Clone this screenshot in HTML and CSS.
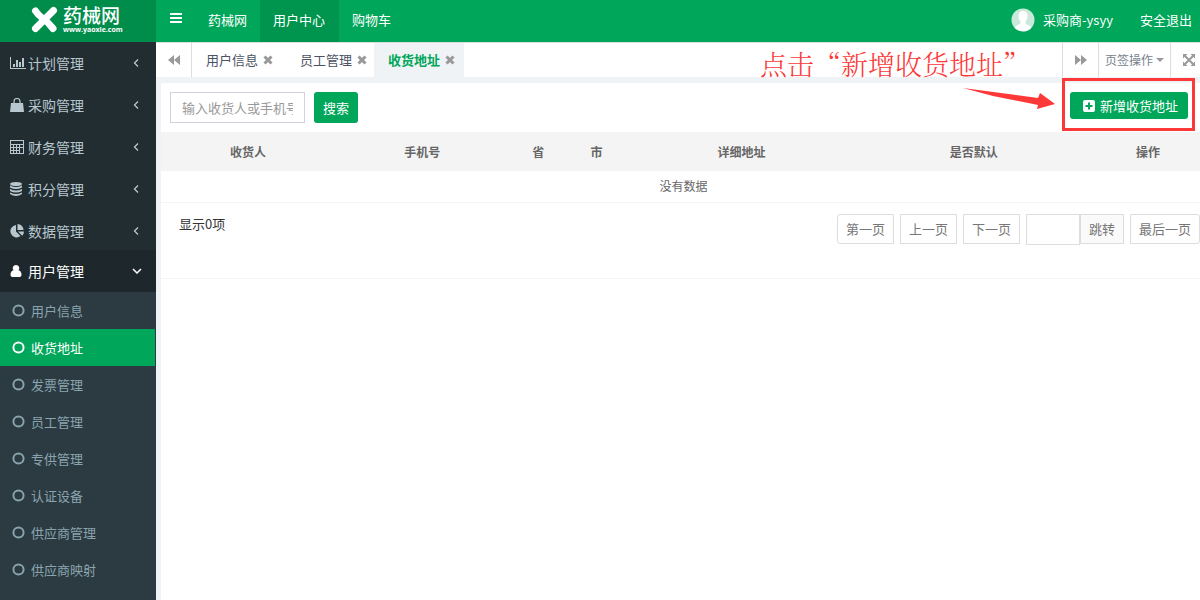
FILE: index.html
```html
<!DOCTYPE html>
<html lang="zh-CN">
<head>
<meta charset="utf-8">
<title>收货地址 - 药械网</title>
<meta name="viewport" content="width=device-width, initial-scale=1">
<link rel="stylesheet" href="styles.css">
</head>
<body>
<svg class="defs" aria-hidden="true">
  <symbol id="left" viewBox="0 0 6 10"><path d="M5 1.500L1.500 5L5 8.500" fill="none" stroke="currentColor" stroke-width="1.300"/></symbol>
  <symbol id="ring" viewBox="0 0 12 12"><circle cx="6" cy="6" r="4.700" fill="none" stroke="currentColor" stroke-width="1.800"/></symbol>
  <symbol id="close" viewBox="0 0 10 10"><path d="M1.500 1.500L8.500 8.500M8.500 1.500L1.500 8.500" fill="none" stroke="currentColor" stroke-width="3"/></symbol>
</svg>
<aside class="sidebar">
  <a class="logo" href="#" aria-label="药械网">
    <svg class="logo-mark" viewBox="0 0 27 27" aria-hidden="true"><path d="M4.500 5Q7 9 12 12.500T22 22.500" fill="none" stroke="#fff" stroke-width="7" stroke-linecap="round"/><path d="M22.500 4.500L4.500 22.500" fill="none" stroke="#fff" stroke-width="7" stroke-linecap="round"/></svg>
    <span class="logo-text"><b>药械网</b><small>www.yaoxie.com</small></span>
  </a>
  <nav class="menu">
    <a class="item" href="#"><svg class="icon" viewBox="0 0 16 14"><path d="M0 1h1v11h15v1H0zM3 8h2v3H3zM6 4h2v7H6zM9 6h2v5H9zM12 2h2v9h-2z" fill="currentColor"/></svg><span>计划管理</span><svg class="arrow"><use href="#left"/></svg></a>
    <a class="item" href="#"><svg class="icon" viewBox="0 0 16 14"><path d="M1 5h12l1 9H0z" fill="currentColor"/><path d="M4 7V3.500a3 3 0 0 1 6 0V7" fill="none" stroke="currentColor" stroke-width="1.200"/></svg><span>采购管理</span><svg class="arrow"><use href="#left"/></svg></a>
    <a class="item" href="#"><svg class="icon" viewBox="0 0 16 14"><path fill-rule="evenodd" d="M0 0h14v14H0zM1 1v3h12V1zM1 5v2h2V5zM4 5v2h2V5zM7 5v2h2V5zM10 5v2h3V5zM1 8v2h2V8zM4 8v2h2V8zM7 8v2h2V8zM1 11v2h2v-2zM4 11v2h2v-2zM7 11v2h2v-2zM10 8v5h3V8z" fill="currentColor"/></svg><span>财务管理</span><svg class="arrow"><use href="#left"/></svg></a>
    <a class="item" href="#"><svg class="icon" viewBox="0 0 16 14"><g fill="currentColor"><ellipse cx="6" cy="2" rx="6" ry="2"/><path d="M0 3.500q6 3 12 0v2q-6 3-12 0zM0 7q6 3 12 0v2q-6 3-12 0zM0 10.500q6 3 12 0v1.500q-6 4-12 0z"/></g></svg><span>积分管理</span><svg class="arrow"><use href="#left"/></svg></a>
    <a class="item" href="#"><svg class="icon" viewBox="0 0 16 14"><path d="M6 1v6.500l4.500 4.500A6.200 6.200 0 1 1 6 1zM7.500 0a6 6 0 0 1 6 6h-6zM8 7.500h6a6 6 0 0 1-1.800 4.200z" fill="currentColor"/></svg><span>数据管理</span><svg class="arrow"><use href="#left"/></svg></a>
    <a class="item open" href="#"><svg class="icon" viewBox="0 0 16 14"><path d="M6 1a3.200 3.200 0 0 1 2.500 5.300Q11.500 7 11.500 11q0 2-2 2h-7q-2 0-2-2 0-4 3-4.700A3.200 3.200 0 0 1 6 1z" fill="currentColor"/></svg><span>用户管理</span><svg class="arrow down" viewBox="0 0 10 6"><path d="M1 1L5 5L9 1" fill="none" stroke="currentColor" stroke-width="1.500"/></svg></a>
    <div class="submenu">
      <a href="#"><svg class="ring"><use href="#ring"/></svg>用户信息</a>
      <a href="#" class="current" aria-current="page"><svg class="ring"><use href="#ring"/></svg>收货地址</a>
      <a href="#"><svg class="ring"><use href="#ring"/></svg>发票管理</a>
      <a href="#"><svg class="ring"><use href="#ring"/></svg>员工管理</a>
      <a href="#"><svg class="ring"><use href="#ring"/></svg>专供管理</a>
      <a href="#"><svg class="ring"><use href="#ring"/></svg>认证设备</a>
      <a href="#"><svg class="ring"><use href="#ring"/></svg>供应商管理</a>
      <a href="#"><svg class="ring"><use href="#ring"/></svg>供应商映射</a>
    </div>
  </nav>
</aside>
<div class="main">
  <header class="topbar">
    <button class="toggle" type="button" aria-label="切换菜单"><svg viewBox="0 0 12 10"><path d="M0 1h12M0 5h12M0 9h12" stroke="currentColor" stroke-width="2"/></svg></button>
    <nav class="topnav"><a href="#">药械网</a><a href="#" class="on">用户中心</a><a href="#">购物车</a></nav>
    <div class="account">
      <a class="user" href="#"><svg class="avatar" viewBox="0 0 24 24"><circle cx="12" cy="12" r="11.500" fill="#cbe9da"/><path d="M12 3c3 0 4.500 2 4.500 5 0 2.500-.8 4.200-2 5.500v2l4.500 2.500q1 .7 1 2a11.500 11.500 0 0 1-16 0q0-1.300 1-2l4.500-2.500v-2c-1.200-1.300-2-3-2-5.500 0-3 1.500-5 4.500-5z" fill="#fff"/></svg>采购商-ysyy</a>
      <a href="#">安全退出</a>
    </div>
  </header>
  <div class="tabs">
    <button class="tool back" type="button" aria-label="向左"><svg viewBox="0 0 12 10"><path d="M6 0v10L0 5zM12 0v10L6 5z" fill="currentColor"/></svg></button>
    <nav class="tablist">
      <a href="#">用户信息<svg class="close"><use href="#close"/></svg></a>
      <a href="#">员工管理<svg class="close"><use href="#close"/></svg></a>
      <a href="#" class="active">收货地址<svg class="close"><use href="#close"/></svg></a>
    </nav>
    <button class="tool" type="button" aria-label="向右"><svg viewBox="0 0 12 10"><path d="M0 0v10l6-5zM6 0v10l6-5z" fill="currentColor"/></svg></button>
    <button class="tool ops" type="button">页签操作<i class="caret"></i></button>
    <button class="tool full" type="button" aria-label="全屏"><svg viewBox="0 0 12 12"><path d="M0 0h4.500L0 4.500zM12 0v4.500L7.500 0zM0 12V7.500L4.500 12zM12 12H7.500L12 7.500z" fill="currentColor"/><path d="M2 2l8 8M10 2l-8 8" stroke="currentColor" stroke-width="2"/></svg></button>
  </div>
  <main class="content">
    <form class="search">
      <input type="text" aria-label="收货人或手机号" placeholder="输入收货人或手机号">
      <button class="btn" type="button">搜索</button>
      <button class="btn add" type="button"><svg viewBox="0 0 12 12"><rect width="12" height="12" rx="2" fill="#fff"/><path d="M6 2.500v7M2.500 6h7" stroke="#00a65a" stroke-width="2"/></svg>新增收货地址</button>
    </form>
    <table class="grid">
      <colgroup><col span="2" class="c3"><col span="2" class="c1"><col span="2" class="c4"><col class="c2"></colgroup>
      <thead><tr><th>收货人</th><th>手机号</th><th>省</th><th>市</th><th>详细地址</th><th>是否默认</th><th>操作</th></tr></thead>
      <tbody><tr><td colspan="7">没有数据</td></tr></tbody>
    </table>
    <footer class="pager">
      <span class="count">显示0项</span>
      <button class="page first" type="button">第一页</button>
      <button class="page" type="button">上一页</button>
      <button class="page" type="button">下一页</button>
      <span class="jump"><input type="text" aria-label="页码"><button type="button">跳转</button></span>
      <button class="page last" type="button">最后一页</button>
    </footer>
  </main>
</div>
<div class="callout">点击<span>“</span>新增收货地址<span>”</span></div>
<svg class="pointer" viewBox="0 0 92 24" aria-hidden="true"><path d="M0 0L75 10L77 5L92 16L74 21L75 17L30 8Z" fill="#fd3838"/></svg>
<div class="highlight"></div>
</body>
</html>
```
FILE: styles.css
```css
* { box-sizing: border-box; }
body {
  margin: 0;
  min-height: 100vh;
  display: flex;
  position: relative;
  overflow: hidden;
  background: #eff3f5;
  font: 13px/20px "Noto Sans CJK SC", sans-serif;
  color: #333;
}
a { color: inherit; text-decoration: none; }
button, input { font: inherit; color: inherit; margin: 0; }
button { padding: 0; border: 0; background: none; }
svg { display: block; flex: none; }
.defs { position: absolute; width: 0; height: 0; }

.sidebar { width: 156px; flex: none; background: #222d32; }
.logo {
  height: 42px;
  display: flex;
  align-items: center;
  gap: 5px;
  padding: 0 0 4px 31px;
  background: #008d4c;
  color: #fff;
}
.logo-mark { width: 27px; height: 27px; }
.logo-text { display: flex; flex-direction: column; }
.logo-text b { font-size: 19px; line-height: 22px; font-weight: 500; }
.logo-text small { font: bold 7px/8px "Open Sans", sans-serif; }
.menu { color: #b8c7ce; }
.item { height: 42px; display: flex; align-items: center; padding: 0 17px 0 10px; font-size: 14px; }
.item .icon { width: 16px; height: 14px; margin-right: 2px; }
.item .arrow { width: 6px; height: 10px; margin: 0 0 0 auto; }
.item .arrow.down { width: 10px; height: 6px; }
.item.open { margin-top: -2px; padding: 0 14px 0 10px; background: #1e282c; color: #fff; }
.submenu { background: #2c3b41; color: #8aa4af; min-height: calc(100vh - 292px); }
.submenu a { height: 37px; margin-right: 1px; padding-left: 12px; display: flex; align-items: center; gap: 6px; }
.ring { width: 13px; height: 13px; }
.submenu .current { background: #00a65a; color: #fff; }

.main { flex: 1; min-width: 0; display: flex; flex-direction: column; }
.topbar { height: 42px; display: flex; background: #00a65a; color: #fff; }
.toggle { width: 39px; padding-bottom: 7px; display: grid; place-items: center; }
.toggle svg { width: 12px; height: 10px; }
.topnav { display: flex; }
.topnav a { padding: 10px 13px 0; }
.topnav .on { background: #00954f; padding-right: 14px; }
.account { margin-left: auto; padding-right: 8px; display: flex; align-items: center; gap: 27px; padding-bottom: 2px; }
.user { display: flex; align-items: center; gap: 8px; }
.avatar { width: 24px; height: 24px; }

.tabs { height: 35px; display: flex; background: #fff; border-top: 1px solid #ddd; color: #999; }
.tool { width: 36px; display: grid; place-items: center; border-left: 1px solid #ddd; }
.tool svg { width: 12px; height: 10px; }
.tool.back { border-left: 0; border-right: 1px solid #ddd; }
.tool.ops { width: 72px; display: flex; align-items: center; justify-content: center; gap: 3px; font-size: 12px; color: #777f8c; }
.caret { border: 4px solid transparent; border-top-color: #999; border-bottom: 0; }
.tool.full { width: 30px; padding-left: 6px; }
.tool.full svg { width: 12px; height: 12px; }
.tablist { flex: 1; display: flex; color: #4c5263; }
.tablist a { display: flex; align-items: center; gap: 5px; padding: 0 9px 0 14px; }
.tablist a + a { padding: 0 7px 0 18px; }
.tablist a + a.active { background: #eff3f5; color: #00a65a; font-weight: 700; padding: 0 9px 0 14px; }
.close { width: 10px; height: 10px; color: #999; }

.content { flex: 1; margin: 6px -6px 0 5px; background: #fff; }
.search { display: flex; height: 49px; padding: 9px 18px 0 9px; align-items: flex-start; gap: 9px; }
.search input { width: 135px; height: 31px; padding: 0 11px; border: 1px solid #d2d2de; background: #fff; }
.search input::placeholder { color: #999; opacity: 1; }
.btn { height: 31px; padding: 0 9px; border-radius: 3px; background: #00a65a; color: #fff; }
.btn.add { height: 27px; margin-left: auto; padding: 0 10px 0 13px; display: flex; align-items: center; gap: 5px; }
.btn.add svg { width: 12px; height: 12px; }
.grid { width: 100%; table-layout: fixed; border-collapse: collapse; font-size: 12px; line-height: 18px; text-align: center; color: #666; }
.c1 { width: 5.555%; }
.c2 { width: 11.111%; }
.c3 { width: 16.666%; }
.c4 { width: 22.222%; }
.grid th { height: 39px; padding: 0; background: #f4f4f4; font-weight: 700; }
.grid td { height: 31px; padding: 0; border-bottom: 1px solid #f4f4f4; }
.pager { height: 76px; display: flex; align-items: flex-start; gap: 6px; padding: 11px 6px 0 18px; border-bottom: 1px solid #f4f4f4; color: #777; }
.count { margin-right: auto; color: #333; }
.page { height: 30px; padding: 0 8px; border: 1px solid #ddd; background: #fff; }
.page.first { border-radius: 3px 0 0 3px; }
.page.last { border-radius: 0 3px 3px 0; }
.jump { display: flex; }
.jump input { width: 54px; height: 31px; border: 1px solid #ddd; }
.jump button { height: 30px; padding: 0 8px; border: 1px solid #ddd; background: #fafafa; }

.callout { position: absolute; right: 170px; top: 46px; display: flex; color: #fd3838; font: 300 27px/36px "Noto Serif CJK SC", "Noto Sans CJK SC", serif; }
.pointer { position: absolute; right: 145px; top: 88px; width: 92px; height: 24px; }
.highlight { position: absolute; right: 5px; top: 78px; width: 133px; height: 53px; border: 3px solid #fd3838; pointer-events: none; }
```
